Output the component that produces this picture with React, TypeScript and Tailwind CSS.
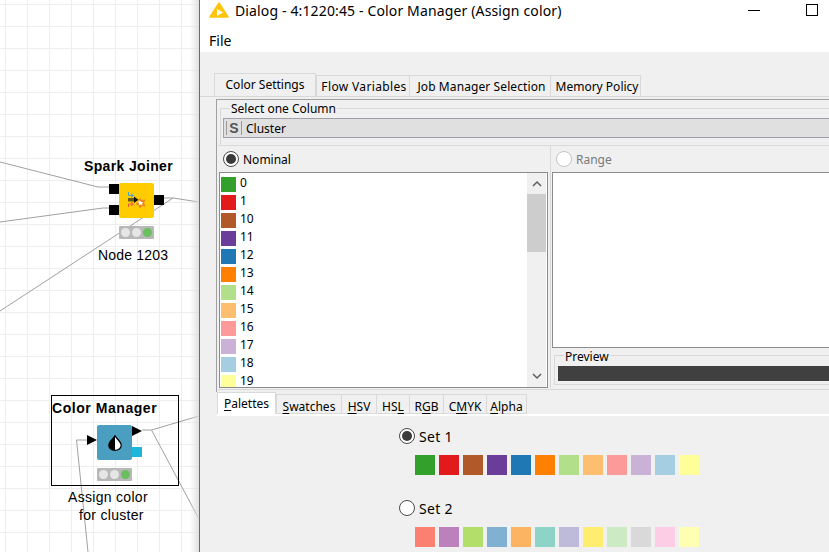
import React from "react";

const set1 = ["#33a02c", "#e31a1c", "#b15928", "#6a3d9a", "#1f78b4", "#ff7f00", "#b2df8a", "#fdbf6f", "#fb9a99", "#cab2d6", "#a6cee3", "#ffff99"];
const set2 = ["#fb8072", "#bc80bd", "#b3de69", "#80b1d3", "#fdb462", "#8dd3c7", "#bebada", "#ffed6f", "#ccebc5", "#d9d9d9", "#fccde5", "#ffffb3"];
const listRows = [
  ["0", "#33a02c"], ["1", "#e31a1c"], ["10", "#b15928"], ["11", "#6a3d9a"], ["12", "#1f78b4"], ["13", "#ff7f00"],
  ["14", "#b2df8a"], ["15", "#fdbf6f"], ["16", "#fb9a99"], ["17", "#cab2d6"], ["18", "#a6cee3"], ["19", "#ffff99"],
];

const Lights = () => (
  <div className="flex h-[13px] w-[35px] items-center justify-center gap-[2px] rounded-[1px] bg-[#b8b8b8]">
    <span className="h-[9px] w-[9px] rounded-full bg-[#e6e6e6]" />
    <span className="h-[9px] w-[9px] rounded-full bg-[#e6e6e6]" />
    <span className="h-[9px] w-[9px] rounded-full bg-[#6abf5e]" />
  </div>
);

const Workflow = () => (
  <div className="relative h-[552px] w-[200px] shrink-0 overflow-hidden bg-white bg-[linear-gradient(#eeeeee_1px,transparent_1px),linear-gradient(90deg,#eeeeee_1px,transparent_1px)] bg-[size:22px_22px] bg-[position:5px_4px] font-['Liberation_Sans',sans-serif] text-black">
    <svg className="absolute inset-0" width="200" height="552" fill="none" stroke="#a0a0a0" strokeWidth="1">
      <path d="M0 162L98 187H109" />
      <path d="M0 222L103 208H109" />
      <path d="M164 198H173L199 202" />
      <path d="M173 198L0 311" />
      <path d="M142 430H151.500L199 416" />
      <path d="M151.500 430L199 519" />
      <path d="M87 440H76.500L88 552" />
    </svg>

    <div className="absolute left-[84px] top-[157px] text-[14px] leading-[18px] font-bold tracking-[0.35px]">Spark Joiner</div>
    <div className="absolute left-[109px] top-[184px] h-[10px] w-[10px] bg-black" />
    <div className="absolute left-[109px] top-[205px] h-[10px] w-[10px] bg-black" />
    <div className="absolute left-[154px] top-[195px] h-[10px] w-[10px] bg-black" />
    <div className="absolute left-[119px] top-[183px] h-[35px] w-[35px] rounded-[2px] bg-[#ffcc00]">
      <svg width="35" height="35" viewBox="0 0 35 35" fill="none">
        <path d="M9.500 9V12.500H14" stroke="#45a5c9" strokeWidth="1" />
        <path d="M12 10.500L14.500 12.500L12 14.500" stroke="#45a5c9" strokeWidth="1" />
        <path d="M9.500 24V21H14" stroke="#f0553a" strokeWidth="1" />
        <path d="M12 19L14.500 21L12 23" stroke="#f0553a" strokeWidth="1" />
        <path d="M9 15H16V18.500H9Z" fill="#6b5a10" />
        <path d="M15 13.500L19.500 16.800L15 20Z" fill="#111111" />
        <path d="M21 14.500L22.500 17L26.500 16.500L25 20L26.500 23.500L23 23L21 25.500L19.500 22.500L16.500 21L19 19Z" fill="#ec8522" />
        <path d="M21 17.500L22 19L24 19L23 20.500L23.500 22.200L21.500 21.500L19.800 22.200L20 20.500L19 19Z" fill="#ffffff" />
      </svg>
    </div>
    <div className="absolute left-[119px] top-[226px]"><Lights /></div>
    <div className="absolute left-[98px] top-[246px] text-[14px] leading-[18px] tracking-[0.2px]">Node 1203</div>

    <div className="absolute left-[51px] top-[395px] h-[91px] w-[128px] border border-black" />
    <div className="absolute left-[52px] top-[399px] text-[14px] leading-[18px] font-bold tracking-[0.55px]">Color Manager</div>
    <div className="absolute left-[97px] top-[425px] flex h-[35px] w-[35px] items-center justify-center rounded-[2px] bg-[#4a9fc0]">
      <svg width="14" height="16" viewBox="0 0 14 16">
        <path d="M7 0.700C6 3.500 0.800 6.500 0.800 10.200C0.800 13.500 3.800 15.300 7 15.300C10.200 15.300 13.200 13.500 13.200 10.200C13.200 6.500 8 3.500 7 0.700Z" fill="#ffffff" stroke="#000000" strokeWidth="1.200" />
        <path d="M7 0.700C6 3.500 0.800 6.500 0.800 10.200C0.800 13.500 3.800 15.300 7 15.300Z" fill="#000000" />
      </svg>
    </div>
    <svg className="absolute left-[87px] top-[435px]" width="10" height="10"><path d="M0 0L10 5L0 10Z" fill="#000000" /></svg>
    <svg className="absolute left-[132px] top-[426px]" width="10" height="10"><path d="M0 0L10 5L0 10Z" fill="#000000" /></svg>
    <div className="absolute left-[132px] top-[447px] h-[10px] w-[10px] bg-[#1fb6dc]" />
    <div className="absolute left-[97px] top-[468px]"><Lights /></div>
    <div className="absolute left-[68px] top-[488px] text-[14px] leading-[18px] tracking-[0.3px]">Assign color</div>
    <div className="absolute left-[79px] top-[506px] text-[14px] leading-[18px] tracking-[0.3px]">for cluster</div>

    <div className="absolute right-0 top-0 h-full w-[10px] bg-gradient-to-r from-transparent to-[#dddddd]" />
    <div className="absolute right-0 top-0 h-full w-[1px] bg-[#6b6b6b]" />
  </div>
);

const Radio = ({ on, light }: { on?: boolean; light?: boolean }) => (
  <span className={`flex h-[16px] w-[16px] shrink-0 items-center justify-center rounded-full border bg-white ${light ? "border-[#c4c4c4]" : "border-[#4a4a4a]"}`}>
    {on && <span className="h-[10px] w-[10px] rounded-full bg-[#3a3a3a]" />}
  </span>
);

const TopTab = ({ label, w, active, extra }: { label: string; w: string; active?: boolean; extra?: string }) => (
  <div className={`${w} ${extra ?? ""} border-l border-t border-[#d9d9d9] text-center ${active ? "h-[23px] border-r bg-[#f0f0f0] pt-[1px] text-[12px] leading-[19px]" : "h-[21px] text-[12px] leading-[22px]"}`}>
    {label}
  </div>
);

const BottomTab = ({ u, rest, pre, w, active }: { u: string; rest: string; pre?: string; w: string; active?: boolean }) => (
  <div className={`${w} border-l border-t border-[#d9d9d9] text-center text-[12px] ${active ? "h-[22px] border-r bg-white leading-[22px]" : "h-[20px] border-b leading-[23px]"}`}>
    {pre}<span className="underline underline-offset-2">{u}</span>{rest}
  </div>
);

const Swatches = ({ colors }: { colors: string[] }) => (
  <div className="ml-[16px] flex gap-[4px]">
    {colors.map((c) => (
      <span key={c} className="h-[20px] w-[20px]" style={{ backgroundColor: c }} />
    ))}
  </div>
);

const Dialog = () => (
  <div className="flex h-[552px] min-w-0 flex-1 flex-col overflow-hidden bg-[#f0f0f0] font-['Noto_Sans',sans-serif] text-black">
    <div className="h-[52px] w-[700px] shrink-0 bg-white">
      <div className="flex h-[20px] items-center pl-[9px]">
        <svg width="20" height="16" viewBox="0 0 20 16">
          <path d="M10 1L19 15H1Z" fill="#fdc50d" stroke="#fdc50d" strokeWidth="1.500" strokeLinejoin="round" />
          <path d="M8 7L14 10.500L8 14Z" fill="#ffffff" />
        </svg>
        <span className="ml-[6px] mt-[2px] text-[14px] leading-[20px] tracking-[0.14px]">Dialog - 4:1220:45 - Color Manager (Assign color)</span>
        <span className="ml-[186px] h-[1px] w-[12px] bg-black" />
        <span className="ml-[46px] h-[12px] w-[12px] border border-black" />
      </div>
      <div className="pl-[9px] pt-[11px] text-[14px] leading-[20px]">File</div>
    </div>

    <div className="flex w-[700px] flex-col pl-[14px] pt-[21px]">
      <div className="flex items-end">
        <TopTab label="Color Settings" w="w-[102px]" active />
        <TopTab label="Flow Variables" w="w-[93px]" extra="pl-[2px] tracking-[0.35px]" />
        <TopTab label="Job Manager Selection" w="w-[141px]" extra="pl-[3px] tracking-[0.1px]" />
        <div className="h-[21px] w-[91px] border-x border-t border-[#d9d9d9] pl-[3px] text-center text-[12px] leading-[22px]">Memory Policy</div>
      </div>
      <div className="-ml-[14px] border-t border-[#d9d9d9]" />

      <div className="ml-[2px] mt-[2px] border-l border-t border-[#a0a0a0] pb-[2px] pl-[1px]">
        <div className="relative ml-[2px] mt-[8px] border-l border-t border-[#d9d9d9] pb-[7px] pl-[2px] pt-[9px]">
          <span className="absolute left-[9px] top-[-8px] bg-[#f0f0f0] px-[1px] text-[12px] leading-[16px]">Select one Column</span>
          <div className="flex h-[20px] items-center border border-[#a0a0a8] bg-[#e0e0e0] pl-[2px] text-[12px]">
            <span className="flex h-[14px] w-[16px] items-center justify-center border-x border-[#9a9a9a] font-['Liberation_Sans',sans-serif] text-[14px] font-bold text-[#555555]">S</span>
            <span className="ml-[4px] mt-[2px]">Cluster</span>
          </div>
        </div>

        <div className="flex border-t border-[#d9d9d9]">
          <div className="w-[332px] shrink-0 pl-[1px] pr-[2px]">
            <div className="flex h-[26px] items-center gap-[4px] pl-[4px] text-[12px]">
              <Radio on />
              <span className="mt-[2px]">Nominal</span>
            </div>
            <div className="flex h-[216px] border border-[#8c8c8c] bg-white pl-[1px] pr-[1px]">
              <div className="min-w-0 flex-1 overflow-hidden pt-[2px]">
                {listRows.map(([label, color]) => (
                  <div key={label} className="flex h-[18px] items-center gap-[4px] text-[12px]">
                    <span className="h-[15px] w-[15px] shrink-0" style={{ backgroundColor: color }} />
                    <span className="pb-[2px]">{label}</span>
                  </div>
                ))}
              </div>
              <div className="flex w-[19px] shrink-0 flex-col items-center bg-[#f0f0f0]">
                <svg className="mt-[7px]" width="10" height="7" viewBox="0 0 10 7" fill="none" stroke="#606060" strokeWidth="1.500"><path d="M1 6L5 2L9 6" /></svg>
                <span className="mt-[7px] h-[58px] w-full bg-[#cdcdcd]" />
                <svg className="mb-[7px] mt-auto" width="10" height="7" viewBox="0 0 10 7" fill="none" stroke="#606060" strokeWidth="1.500"><path d="M1 1L5 5L9 1" /></svg>
              </div>
            </div>
          </div>

          <div className="min-w-0 flex-1 border-l border-[#d9d9d9] pl-[1px]">
            <div className="flex h-[26px] items-center gap-[4px] pl-[4px] text-[12px] text-[#7a7a7a]">
              <Radio light />
              <span className="mt-[2px]">Range</span>
            </div>
            <div className="h-[176px] border-y border-l border-[#8c8c8c] bg-white" />
            <div className="relative ml-[2px] mt-[7px] h-[30px] border-y border-l border-[#d9d9d9] pl-[3px] pt-[10px]">
              <span className="absolute left-[9px] top-[-7px] bg-[#f0f0f0] px-[1px] text-[12px] leading-[16px]">Preview</span>
              <div className="h-[15px] bg-[#404040]" />
            </div>
          </div>
        </div>
        <div className="mt-[1px] border-t border-[#d9d9d9]" />
      </div>

      <div className="ml-[3px] flex items-end">
        <BottomTab u="P" rest="alettes" w="w-[59px]" active />
        <BottomTab u="S" rest="watches" w="w-[65px]" />
        <BottomTab u="H" rest="SV" w="w-[35px]" />
        <BottomTab pre="HS" u="L" rest="" w="w-[33px]" />
        <BottomTab pre="R" u="G" rest="B" w="w-[34px]" />
        <BottomTab pre="C" u="M" rest="YK" w="w-[43px]" />
        <BottomTab u="A" rest="lpha" w="w-[41px] border-r" />
      </div>
      <div className="ml-[3px] h-[2px] bg-white" />
    </div>

    <div className="w-[700px] pl-[199px] pt-[12px]">
      <div className="flex h-[16px] items-center gap-[4px] text-[14px] tracking-[0.3px]">
        <Radio on />
        <span>Set 1</span>
      </div>
      <div className="mt-[11px]"><Swatches colors={set1} /></div>
      <div className="mt-[25px] flex h-[16px] items-center gap-[4px] text-[14px] tracking-[0.3px]">
        <Radio />
        <span>Set 2</span>
      </div>
      <div className="mt-[11px]"><Swatches colors={set2} /></div>
    </div>
  </div>
);

const App = () => (
  <div className="flex h-[552px] w-[829px] overflow-hidden">
    <Workflow />
    <Dialog />
  </div>
);

export default App;
